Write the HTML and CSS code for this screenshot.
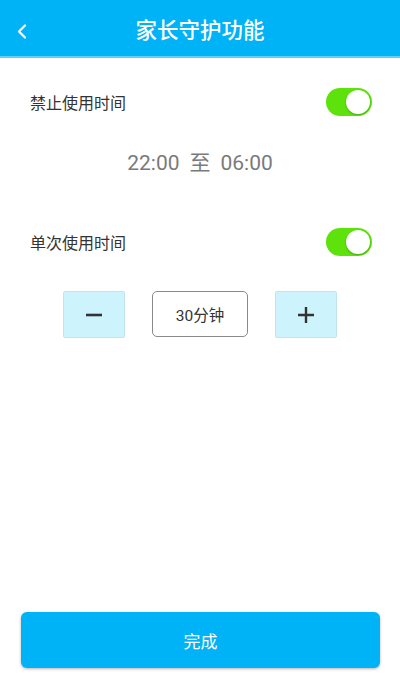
FILE: index.html
```html
<!DOCTYPE html>
<html lang="zh-CN">
<head>
    <meta charset="UTF-8">
    <title>家长守护功能</title>
    <link rel="stylesheet" href="styles.css">
</head>
<body>
    <div class="page">
        <header class="topbar">
            <a class="back" href="#">
                <svg width="10" height="15" viewBox="0 0 10 15"><path d="M8 1.5 L2 7.5 L8 13.5" fill="none" stroke="#fff" stroke-width="2.2" stroke-linecap="round" stroke-linejoin="round"/></svg>
            </a>
            <h1>家长守护功能</h1>
        </header>
        <div class="content">
            <div class="row row-first">
                <span class="label">禁止使用时间</span>
                <span class="switch on"><span class="knob"></span></span>
            </div>
            <div class="time-range">22:00<span class="to">至</span>06:00</div>
            <div class="row row-second">
                <span class="label">单次使用时间</span>
                <span class="switch on"><span class="knob"></span></span>
            </div>
            <div class="stepper">
                <button class="step">
                    <svg width="18" height="18" viewBox="0 0 18 18"><path d="M1 9 H17" stroke="#333" stroke-width="2.6"/></svg>
                </button>
                <div class="value">30分钟</div>
                <button class="step">
                    <svg width="18" height="18" viewBox="0 0 18 18"><path d="M1 9 H17 M9 1 V17" stroke="#333" stroke-width="2.4"/></svg>
                </button>
            </div>
        </div>
        <div class="footer">
            <button class="done">完成</button>
        </div>
    </div>
</body>
</html>
```

FILE: styles.css
```css
html, body {
    margin: 0;
    padding: 0;
}
body {
    font-family: Roboto, "Noto Sans CJK SC", sans-serif;
    background: #fff;
}
.page {
    height: 697px;
    display: flex;
    flex-direction: column;
}
.topbar {
    height: 58px;
    background: #00b2f6;
    border-bottom: 2px solid #5fd0fb;
    box-sizing: border-box;
    display: flex;
    align-items: center;
    justify-content: center;
    position: relative;
}
.topbar h1 {
    margin: 0;
    color: #fff;
    font-size: 21.5px;
    font-weight: 500;
}
.back {
    position: absolute;
    left: 17px;
    top: 24px;
    display: flex;
}
.content {
    flex: 1;
}
.row {
    display: flex;
    align-items: center;
    justify-content: space-between;
    padding: 0 28px 0 30px;
}
.row-first {
    margin-top: 30px;
}
.row-second {
    margin-top: 52px;
}
.label {
    font-size: 16px;
    color: #333;
}
.switch {
    width: 46px;
    height: 28px;
    border-radius: 14px;
    background: #5de20b;
    display: flex;
    align-items: center;
    justify-content: flex-end;
    padding: 0 2px;
    box-sizing: border-box;
}
.knob {
    width: 24px;
    height: 24px;
    border-radius: 50%;
    background: #fff;
    box-shadow: 0 1px 2px rgba(0,0,0,0.25);
}
.time-range {
    margin-top: 30px;
    text-align: center;
    font-size: 21px;
    color: #7a7a7a;
}
.to {
    margin: 0 10px;
}
.stepper {
    margin-top: 35px;
    display: flex;
    justify-content: center;
    gap: 27px;
}
.step {
    width: 62px;
    height: 47px;
    background: #cdf3fd;
    border: 1px solid #c2e4ee;
    border-radius: 2px;
    display: flex;
    align-items: center;
    justify-content: center;
    padding: 0;
}
.value {
    width: 96px;
    height: 46px;
    border: 1px solid #8a8a8a;
    border-radius: 5px;
    box-sizing: border-box;
    display: flex;
    align-items: center;
    justify-content: center;
    font-size: 15.5px;
    color: #333;
}
.footer {
    padding: 0 20px 29px 21px;
}
.done {
    width: 100%;
    height: 56px;
    border: none;
    border-radius: 6px;
    background: #00b2f6;
    color: #fff;
    font-family: Roboto, "Noto Sans CJK SC", sans-serif;
    font-size: 17px;
    box-shadow: 0 1px 3px rgba(0,0,0,0.3);
}
```
